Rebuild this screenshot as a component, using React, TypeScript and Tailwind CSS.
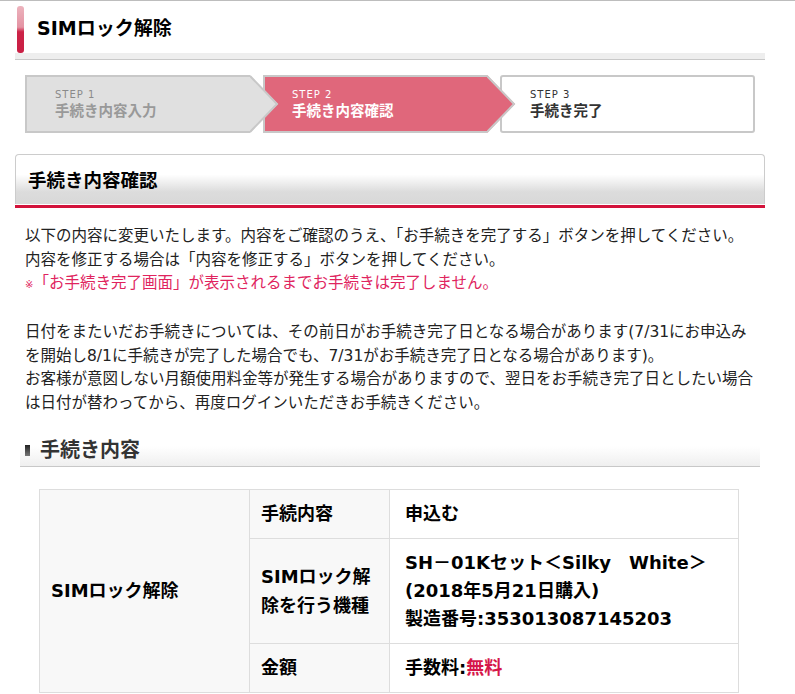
import React from "react";

const font = { fontFamily: '"DejaVu Sans", "Noto Sans CJK JP", "Noto Sans", sans-serif' };

function StepArrow({ fill }: { fill: string }) {
  return (
    <svg className="absolute left-full top-[-2px] z-10 h-[58px] w-[30px]" viewBox="0 0 30 58">
      <polygon points="0,0 28,29 0,58" fill={fill} />
      <polyline points="0,1 27,29 0,57" fill="none" stroke="#c8c8c8" strokeWidth={2} />
    </svg>
  );
}

export default function App() {
  return (
    <div className="min-h-[694px] w-[795px] border-t border-[#bdbdbd] bg-white text-[#222]" style={font}>
      <div className="ml-[15px] w-[750px]">
        {/* Page header */}
        <div className="flex h-[52px] items-center">
          <div className="ml-[2px] mt-[4px] h-[47px] w-[7px] rounded-[3px] bg-[linear-gradient(to_bottom,#ecb3bd_0%,#e493a3_45%,#cc2347_55%,#c91f44_100%)]" />
          <h1 className="ml-[13px] mt-[3px] text-[19px] font-bold text-black">SIMロック解除</h1>
        </div>
        <div className="h-[7px] border-b border-[#c9c9c9] bg-[#eeeeee]" />

        {/* Steps */}
        <div className="mt-[15px] ml-[10px] flex h-[58px]">
          <div className="relative flex w-[225px] flex-col justify-center border-2 border-r-0 border-[#c8c8c8] bg-[#e0e0e0] pl-[28px]">
            <span className="mb-[2px] text-[10px] leading-[11px] tracking-[1px] text-[#8a8a8a]">STEP 1</span>
            <span className="text-[14.5px] font-bold leading-[18px] text-[#999]">手続き内容入力</span>
            <StepArrow fill="#e0e0e0" />
          </div>
          <div className="relative ml-[13px] flex w-[224px] flex-col justify-center border-2 border-r-0 border-[#c8c8c8] bg-[#e0677b] pl-[27px]">
            <span className="mb-[2px] text-[10px] leading-[11px] tracking-[1px] text-white">STEP 2</span>
            <span className="text-[14.5px] font-bold leading-[18px] text-white">手続き内容確認</span>
            <StepArrow fill="#e0677b" />
          </div>
          <div className="ml-[13px] flex w-[255px] flex-col justify-center rounded-[3px] border-2 border-[#c8c8c8] bg-white pl-[28px]">
            <span className="mb-[2px] text-[10px] leading-[11px] tracking-[1px] text-[#333]">STEP 3</span>
            <span className="text-[14.5px] font-bold leading-[18px] text-[#333]">手続き完了</span>
          </div>
        </div>

        {/* Section header */}
        <div className="mt-[21px] flex h-[50px] items-center rounded-t-[4px] border border-b-0 border-[#cccccc] bg-[linear-gradient(to_bottom,#ffffff_0%,#ffffff_40%,#dcdcdc_75%,#d8d8d8_100%)] pl-[12px]">
          <h2 className="mt-[2px] text-[18.5px] font-bold text-black">手続き内容確認</h2>
        </div>
        <div className="h-[1px] bg-white" />
        <div className="h-[3px] bg-[#d3133b]" />

        {/* Notes */}
        <div className="mt-[17px] pl-[10px] text-[15.5px] leading-[23.7px] whitespace-nowrap text-[#222]">
          <p>以下の内容に変更いたします。内容をご確認のうえ、「お手続きを完了する」ボタンを押してください。</p>
          <p>内容を修正する場合は「内容を修正する」ボタンを押してください。</p>
          <p className="text-[#e0245e]">
            <span className="text-[10px]">※</span>「お手続き完了画面」が表示されるまでお手続きは完了しません。
          </p>
          <p className="mt-[23.7px]">
            日付をまたいだお手続きについては、その前日がお手続き完了日となる場合があります(7/31にお申込み
            <br />
            を開始し8/1に手続きが完了した場合でも、7/31がお手続き完了日となる場合があります)。
            <br />
            お客様が意図しない月額使用料金等が発生する場合がありますので、翌日をお手続き完了日としたい場合
            <br />
            は日付が替わってから、再度ログインいただきお手続きください。
          </p>
        </div>

        {/* Sub heading */}
        <div className="ml-[5px] mt-[17px] flex h-[34px] w-[740px] items-center border-b border-[#c8c8c8] bg-[linear-gradient(to_bottom,#ffffff_0%,#ffffff_40%,#efefef_100%)] pl-[5px]">
          <span className="mt-[3px] h-[11px] w-[5px] bg-[linear-gradient(to_bottom,#222,#777)]" />
          <h3 className="ml-[10px] mt-[2px] text-[20px] font-bold text-[#333]">手続き内容</h3>
        </div>

        {/* Table */}
        <table className="ml-[24px] mt-[22px] w-[700px] table-fixed border-collapse text-[18px] font-bold leading-[28px] text-black">
          <colgroup>
            <col className="w-[210px]" />
            <col className="w-[140px]" />
            <col />
          </colgroup>
          <tbody>
            <tr className="h-[49px]">
              <td rowSpan={3} className="border border-[#dddddd] bg-[#f8f8f8] pl-[11px] align-middle">
                SIMロック解除
              </td>
              <td className="border border-[#dddddd] bg-[#f8f8f8] pl-[11px] align-middle">手続内容</td>
              <td className="border border-[#dddddd] bg-white pl-[15px] align-middle">申込む</td>
            </tr>
            <tr className="h-[105px]">
              <td className="border border-[#dddddd] bg-[#f8f8f8] pl-[11px] align-middle leading-[29px] whitespace-nowrap">
                SIMロック解
                <br />
                除を行う機種
              </td>
              <td className="border border-[#dddddd] bg-white pl-[15px] align-middle">
                SH－01Kセット＜Silky　White＞
                <br />
                (2018年5月21日購入)
                <br />
                製造番号:353013087145203
              </td>
            </tr>
            <tr className="h-[49px]">
              <td className="border border-[#dddddd] bg-[#f8f8f8] pl-[11px] align-middle">金額</td>
              <td className="border border-[#dddddd] bg-white pl-[15px] align-middle">
                手数料:<span className="text-[#d6174a]">無料</span>
              </td>
            </tr>
          </tbody>
        </table>
      </div>
    </div>
  );
}
